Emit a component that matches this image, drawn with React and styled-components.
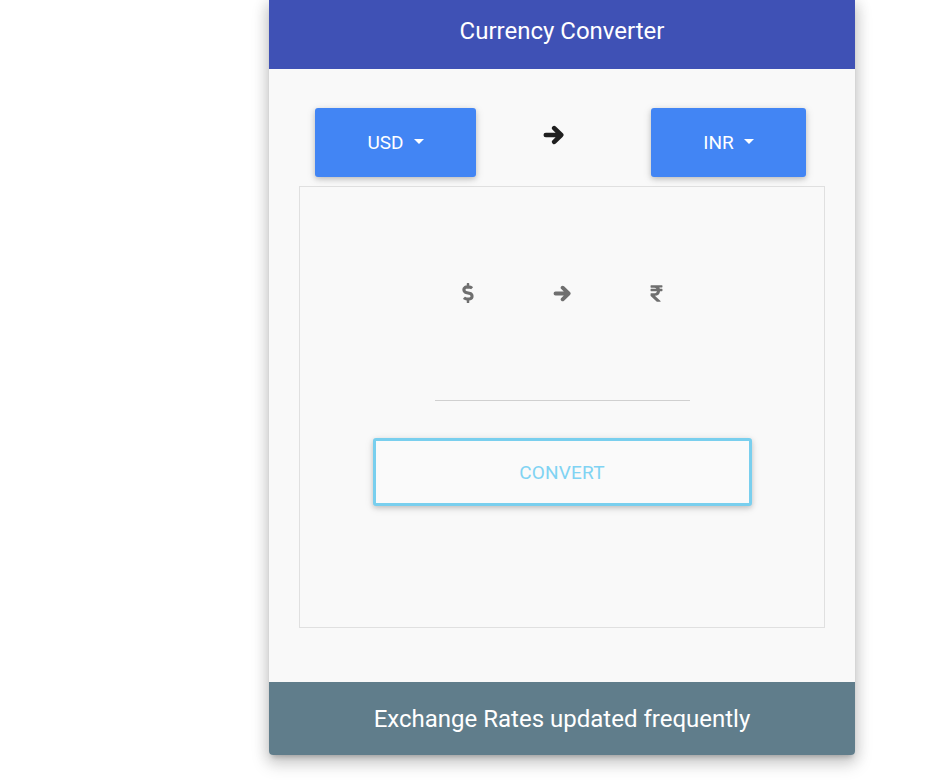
import React from "react";
import styled, { createGlobalStyle } from "styled-components";
import { FaDollarSign, FaRupeeSign } from "react-icons/fa";

const Global = createGlobalStyle`
  html, body { margin: 0; padding: 0; background: #ffffff; }
  body { font-family: Roboto, "Noto Sans", Arial, sans-serif; }
  * { box-sizing: border-box; }
`;

const Page = styled.div`
  padding-left: 269px;
  padding-bottom: 25px;
`;

const Card = styled.div`
  width: 586px;
  background: #f9f9f9;
  border-radius: 0 0 4px 4px;
  overflow: hidden;
  box-shadow: 0 8px 17px 2px rgba(0,0,0,0.14), 0 3px 14px 2px rgba(0,0,0,0.12), 0 5px 5px -3px rgba(0,0,0,0.2);
`;

const Header = styled.header`
  height: 69px;
  background: #3f51b5;
  color: #ffffff;
  font-size: 24px;
  line-height: 28px;
  padding-top: 17px;
  text-align: center;
`;

const Body = styled.main`
  padding: 39px 30px 54px;
`;

const SelectRow = styled.div`
  display: grid;
  grid-template-columns: 161px 1fr 155px;
  padding: 0 19px 0 16px;
  height: 69px;
`;

const Dropdown = styled.button`
  height: 69px;
  border: none;
  border-radius: 3px;
  background: #4285f4;
  color: #ffffff;
  font-family: Roboto, Arial, sans-serif;
  font-size: 19px;
  display: flex;
  align-items: center;
  justify-content: center;
  box-shadow: 0 2px 5px 0 rgba(0,0,0,0.16), 0 2px 10px 0 rgba(0,0,0,0.12);
  cursor: pointer;
`;

const Caret = styled.span`
  display: inline-block;
  margin-left: 10px;
  margin-bottom: 2px;
  width: 0;
  height: 0;
  border-top: 5.5px solid #ffffff;
  border-left: 5.5px solid transparent;
  border-right: 5.5px solid transparent;
`;

const TopArrow = styled.div`
  align-self: start;
  margin-top: 17px;
  margin-left: 67px;
  color: #1f1f1f;
  display: flex;
`;

const Panel = styled.section`
  margin-top: 9px;
  height: 442px;
  border: 1px solid #e0e0e0;
  background: #f9f9f9;
  padding-top: 96px;
  display: flex;
  flex-direction: column;
  align-items: center;
`;

const SymbolRow = styled.div`
  display: flex;
  align-items: center;
  gap: 75px;
  height: 20px;
  color: #6f6f6f;
`;

const Amount = styled.input`
  margin-top: 53px;
  width: 255px;
  height: 45px;
  border: none;
  border-bottom: 1px solid #d0d0d0;
  background: transparent;
  outline: none;
  font-family: Roboto, Arial, sans-serif;
  font-size: 18px;
  text-align: center;
`;

const ConvertButton = styled.button`
  margin-top: 37px;
  width: 379px;
  height: 68px;
  border: 3px solid #79cfee;
  border-radius: 3px;
  background: #fafafa;
  color: #80d3f3;
  font-family: Roboto, Arial, sans-serif;
  font-size: 19px;
  letter-spacing: 0.2px;
  box-shadow: 0 2px 5px 0 rgba(0,0,0,0.16), 0 2px 10px 0 rgba(0,0,0,0.10);
  cursor: pointer;
`;

const Footer = styled.footer`
  height: 73px;
  background: #607d8b;
  color: #ffffff;
  font-size: 24px;
  display: flex;
  align-items: center;
  justify-content: center;
`;

function ArrowIcon({ width, height }) {
  return (
    <svg width={width} height={height} viewBox="0 0 22 20" fill="none" aria-hidden="true">
      <path
        d="M2.8 10 H17.5 M11.2 3.2 L18.2 10 L11.2 16.8"
        stroke="currentColor"
        strokeWidth="4.6"
        strokeLinecap="round"
        strokeLinejoin="round"
      />
    </svg>
  );
}

export default function App() {
  return (
    <>
      <Global />
      <Page>
        <Card>
          <Header>Currency Converter</Header>
          <Body>
            <SelectRow>
              <Dropdown>USD<Caret /></Dropdown>
              <TopArrow><ArrowIcon width={22} height={20} /></TopArrow>
              <Dropdown>INR<Caret /></Dropdown>
            </SelectRow>
            <Panel>
              <SymbolRow>
                <FaDollarSign size={20} />
                <ArrowIcon width={19} height={17} />
                <FaRupeeSign size={19} />
              </SymbolRow>
              <Amount type="text" aria-label="amount" />
              <ConvertButton>CONVERT</ConvertButton>
            </Panel>
          </Body>
          <Footer>Exchange Rates updated frequently</Footer>
        </Card>
      </Page>
    </>
  );
}
